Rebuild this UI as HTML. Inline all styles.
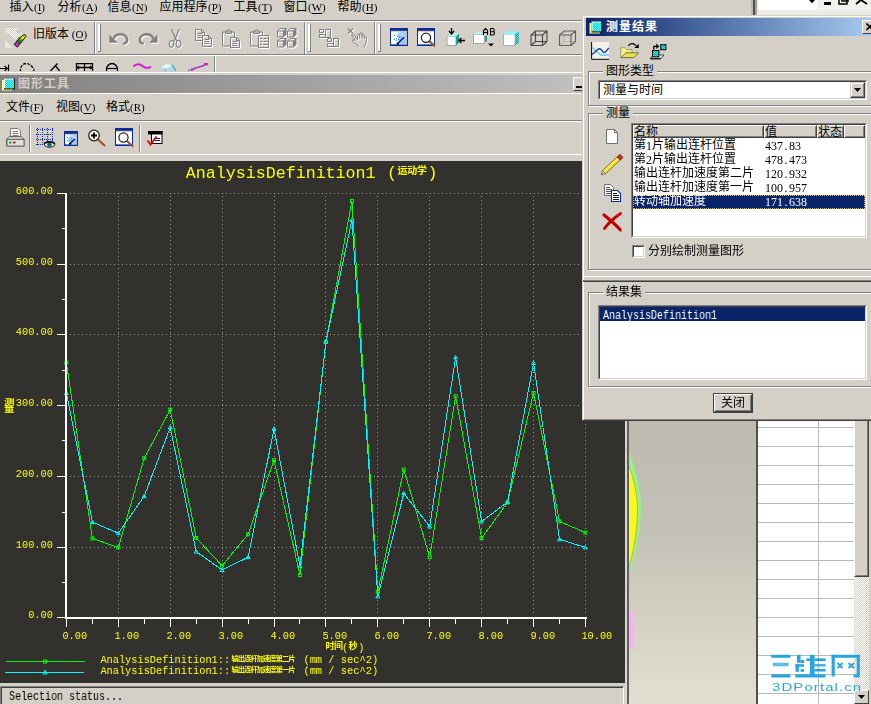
<!DOCTYPE html>
<html><head><meta charset="utf-8"><title>graph</title>
<style>
html,body{margin:0;padding:0}
body{width:871px;height:704px;overflow:hidden;position:relative;background:#d4d0c8;font-family:"Liberation Sans",sans-serif;font-size:12px;color:#000}
.t{position:absolute;white-space:nowrap;line-height:12px;height:12px}
.m,.n,.s{will-change:transform}
.t>*{vertical-align:top}
.cj{display:inline-block;font-family:"Liberation Sans","Noto Sans CJK SC",sans-serif;font-size:12px;line-height:12px;height:12px;white-space:nowrap;color:#000}
.m{font-family:"Liberation Mono",monospace;font-size:12px;letter-spacing:0;line-height:13px;display:inline-block;position:relative;top:1.5px;transform:scaleX(0.8334);transform-origin:0 50%}
.m u{text-decoration:underline;text-underline-offset:1px}
.n{font-family:"Liberation Serif",serif;font-size:12px;line-height:13px;display:inline-block;position:relative;top:1px}
.n i{display:inline-block;width:6px;text-align:center;font-style:normal}
.s{font-family:"Liberation Serif",serif;font-size:11px;line-height:12px;display:inline-block;white-space:pre}
.s u{text-decoration:underline;text-underline-offset:1.5px;text-decoration-thickness:1px}
.sf{position:absolute;white-space:nowrap;font-family:"Liberation Mono",monospace;color:#ffff00;line-height:1}</style></head>
<body>

<div class="t " style="left:9.5px;top:1px;"><span class="cj">插入</span><span class="s">(<u>I</u>)</span></div>
<div class="t " style="left:57.5px;top:1px;"><span class="cj">分析</span><span class="s">(<u>A</u>)</span></div>
<div class="t " style="left:107.5px;top:1px;"><span class="cj">信息</span><span class="s">(<u>N</u>)</span></div>
<div class="t " style="left:159.5px;top:1px;"><span class="cj">应用程序</span><span class="s">(<u>P</u>)</span></div>
<div class="t " style="left:233.5px;top:1px;"><span class="cj">工具</span><span class="s">(<u>T</u>)</span></div>
<div class="t " style="left:283.5px;top:1px;"><span class="cj">窗口</span><span class="s">(<u>W</u>)</span></div>
<div class="t " style="left:337.5px;top:1px;"><span class="cj">帮助</span><span class="s">(<u>H</u>)</span></div>
<div class="" style="position:absolute;left:0px;top:20px;width:582px;height:1px;background:#808080"></div>
<div class="" style="position:absolute;left:0px;top:21px;width:582px;height:1px;background:#fff"></div>
<div class="" style="position:absolute;left:0px;top:54px;width:582px;height:1px;background:#808080"></div>
<div class="" style="position:absolute;left:0px;top:55px;width:582px;height:1px;background:#fff"></div>
<div class="" style="position:absolute;left:94px;top:22px;width:1px;height:32px;background:#808080"></div>
<div class="" style="position:absolute;left:95px;top:22px;width:1px;height:32px;background:#fff"></div>
<div class="" style="position:absolute;left:98px;top:24px;width:3px;height:28px;background:#fff;border-right:1px solid #808080;border-bottom:1px solid #808080;box-sizing:border-box"></div>
<div class="" style="position:absolute;left:304px;top:22px;width:1px;height:32px;background:#808080"></div>
<div class="" style="position:absolute;left:305px;top:22px;width:1px;height:32px;background:#fff"></div>
<div class="" style="position:absolute;left:308px;top:24px;width:3px;height:28px;background:#fff;border-right:1px solid #808080;border-bottom:1px solid #808080;box-sizing:border-box"></div>
<div class="" style="position:absolute;left:374px;top:22px;width:1px;height:32px;background:#808080"></div>
<div class="" style="position:absolute;left:375px;top:22px;width:1px;height:32px;background:#fff"></div>
<div class="" style="position:absolute;left:378px;top:24px;width:3px;height:28px;background:#fff;border-right:1px solid #808080;border-bottom:1px solid #808080;box-sizing:border-box"></div>
<div class="t " style="left:33px;top:27.5px;"><span class="cj">旧版本</span><span class="s"> (<u>O</u>)</span></div>
<div class="" style="position:absolute;left:214px;top:56px;width:1px;height:16px;background:#808080"></div>
<div class="" style="position:absolute;left:215px;top:56px;width:1px;height:16px;background:#fff"></div>
<svg style="position:absolute;left:0;top:0" width="582" height="71" viewBox="0 0 582 71"><defs><pattern id="dith" width="2" height="2" patternUnits="userSpaceOnUse"><rect width="2" height="2" fill="#d4d0c8"/><rect width="1" height="1" fill="#fff"/><rect x="1" y="1" width="1" height="1" fill="#fff"/></pattern><pattern id="dithY" width="2" height="2" patternUnits="userSpaceOnUse"><rect width="2" height="2" fill="#ffff00"/><rect width="1" height="1" fill="#fff"/><rect x="1" y="1" width="1" height="1" fill="#fff"/></pattern><pattern id="dithC" width="2" height="2" patternUnits="userSpaceOnUse"><rect width="2" height="2" fill="#00e0e0"/><rect width="1" height="1" fill="#80ffff"/><rect x="1" y="1" width="1" height="1" fill="#80ffff"/></pattern><pattern id="dithT" width="2" height="2" patternUnits="userSpaceOnUse"><rect width="2" height="2" fill="#20a0a0"/><rect width="1" height="1" fill="#60d8d8"/><rect x="1" y="1" width="1" height="1" fill="#60d8d8"/></pattern><pattern id="dithC2" width="2" height="2" patternUnits="userSpaceOnUse"><rect width="2" height="2" fill="#10d8d8"/><rect width="1" height="1" fill="#60f0f0"/><rect x="1" y="1" width="1" height="1" fill="#60f0f0"/></pattern><pattern id="dithC3" width="2" height="2" patternUnits="userSpaceOnUse"><rect width="2" height="2" fill="#00a8b0"/><rect width="1" height="1" fill="#40e8e0"/><rect x="1" y="1" width="1" height="1" fill="#40e8e0"/></pattern></defs><path d="M5 28H17L22 33V36L17 40.5L5 31.5ZM5 40L13 47.7H5Z" fill="url(#dith)"/><path d="M16 30.5H19.5L21 33H17Z" fill="#c4c4c4"/><g transform="translate(20.2,40.2) rotate(-51)"><path d="M-7.4 -2.4H1.8L7.4 -0.6V2.4H-7.4Z" fill="#000"/><rect x="-6.7" y="-1.6" width="3.2" height="3.2" fill="#e020e0"/><rect x="-3.5" y="-1.6" width="3.4" height="3.2" fill="#109010"/><rect x="-0.1" y="-1.6" width="2" height="3.2" fill="#a0a000"/><path d="M1.9 -1.6L6.8 0V1.6H1.9Z" fill="#f0f000"/></g><path d="M113.5 39C114.5 35.5 117.5 34.3 120.5 34.3C124.5 34.3 127.3 36.8 127.3 39.8C127.3 42 125.8 43.4 123.3 43.8" fill="none" stroke="#fff" stroke-width="2.4" transform="translate(1,1)" /><path d="M113.5 39C114.5 35.5 117.5 34.3 120.5 34.3C124.5 34.3 127.3 36.8 127.3 39.8C127.3 42 125.8 43.4 123.3 43.8" fill="none" stroke="#808080" stroke-width="2.4" /><path d="M109.5 34.5L117.8 42.8L109.5 42.8Z" fill="#fff" transform="translate(1,1)" /><path d="M109.5 34.5L117.8 42.8L109.5 42.8Z" fill="#808080" /><path d="M153.5 39C152.5 35.5 149.5 34.3 146.5 34.3C142.5 34.3 139.7 36.8 139.7 39.8C139.7 42 141.2 43.4 143.7 43.8" fill="none" stroke="#fff" stroke-width="2.4" transform="translate(1,1)" /><path d="M153.5 39C152.5 35.5 149.5 34.3 146.5 34.3C142.5 34.3 139.7 36.8 139.7 39.8C139.7 42 141.2 43.4 143.7 43.8" fill="none" stroke="#808080" stroke-width="2.4" /><path d="M157.5 34.5L149.2 42.8L157.5 42.8Z" fill="#fff" transform="translate(1,1)" /><path d="M157.5 34.5L149.2 42.8L157.5 42.8Z" fill="#808080" /><path d="M171.5 29L176.8 41M179.5 29L174.2 41" fill="none" stroke="#fff" stroke-width="1.2" transform="translate(1,1)" /><path d="M171.5 29L176.8 41M179.5 29L174.2 41" fill="none" stroke="#808080" stroke-width="1.2" /><path d="M172 40.5c-2.2 0-2.8 2-2.8 3.7s0.6 3 2 3s2.8-1.6 2.8-3.6s-0.6-3.1-2-3.1ZM179 40.5c-2.2 0-2.8 2-2.8 3.7s0.6 3 2 3s2.8-1.6 2.8-3.6s-0.6-3.1-2-3.1Z" fill="none" stroke="#fff" stroke-width="1.1" transform="translate(1,1)" /><path d="M172 40.5c-2.2 0-2.8 2-2.8 3.7s0.6 3 2 3s2.8-1.6 2.8-3.6s-0.6-3.1-2-3.1ZM179 40.5c-2.2 0-2.8 2-2.8 3.7s0.6 3 2 3s2.8-1.6 2.8-3.6s-0.6-3.1-2-3.1Z" fill="none" stroke="#808080" stroke-width="1.1" /><path d="M195.5 29.5H201.5L204.5 32.5V40.5H195.5ZM201.5 29.5V32.5H204.5M197.5 33.5H202.5M197.5 35.5H202.5M197.5 37.5H202.5" fill="none" stroke="#fff" stroke-width="1" transform="translate(1,1)" /><path d="M195.5 29.5H201.5L204.5 32.5V40.5H195.5ZM201.5 29.5V32.5H204.5M197.5 33.5H202.5M197.5 35.5H202.5M197.5 37.5H202.5" fill="none" stroke="#808080" stroke-width="1" /><rect x="202" y="36" width="10" height="11" fill="#d4d0c8"/><path d="M202.5 35.5H208.5L211.5 38.5V46.5H202.5ZM208.5 35.5V38.5H211.5M204.5 39.5H209.5M204.5 41.5H209.5M204.5 43.5H209.5" fill="none" stroke="#fff" stroke-width="1" transform="translate(1,1)" /><path d="M202.5 35.5H208.5L211.5 38.5V46.5H202.5ZM208.5 35.5V38.5H211.5M204.5 39.5H209.5M204.5 41.5H209.5M204.5 43.5H209.5" fill="none" stroke="#808080" stroke-width="1" /><path d="M222.5 32H234.5V46H222.5ZM225.5 33.5V31H227.5V30H229.5V31H231.5V33.5Z" fill="none" stroke="#fff" stroke-width="1" transform="translate(1,1)" /><path d="M222.5 32H234.5V46H222.5ZM225.5 33.5V31H227.5V30H229.5V31H231.5V33.5Z" fill="none" stroke="#808080" stroke-width="1" /><rect x="230" y="38" width="10" height="10" fill="#d4d0c8"/><path d="M230.5 37.5H236.5L239.5 40.5V47.5H230.5ZM236.5 37.5V40.5H239.5M232.5 41.5H237.5M232.5 43.5H237.5M232.5 45.5H237.5" fill="none" stroke="#fff" stroke-width="1" transform="translate(1,1)" /><path d="M230.5 37.5H236.5L239.5 40.5V47.5H230.5ZM236.5 37.5V40.5H239.5M232.5 41.5H237.5M232.5 43.5H237.5M232.5 45.5H237.5" fill="none" stroke="#808080" stroke-width="1" /><path d="M250.5 32H262.5V46H250.5ZM253.5 33.5V31H255.5V30H257.5V31H259.5V33.5Z" fill="none" stroke="#fff" stroke-width="1" transform="translate(1,1)" /><path d="M250.5 32H262.5V46H250.5ZM253.5 33.5V31H255.5V30H257.5V31H259.5V33.5Z" fill="none" stroke="#808080" stroke-width="1" /><rect x="258" y="36" width="11" height="12" fill="#d4d0c8"/><path d="M258.5 35.5H268.5V47.5H258.5ZM260 38.5h2M263.5 38.5h4M260 41.5h2M263.5 41.5h4M260 44.5h2M263.5 44.5h4" fill="none" stroke="#fff" stroke-width="1" transform="translate(1,1)" /><path d="M258.5 35.5H268.5V47.5H258.5ZM260 38.5h2M263.5 38.5h4M260 41.5h2M263.5 41.5h4M260 44.5h2M263.5 44.5h4" fill="none" stroke="#808080" stroke-width="1" /><path d="M284.5 32.0L287.0 29.5V35.5L284.5 38.0Z" fill="#fff"/><path d="M277.5 31.0H283.5V37.0H277.5ZM277.5 31.0L280.0 28.5H286.0V34.5L283.5 37.0M283.5 31.0L286.0 28.5" fill="none" stroke="#fff" stroke-width="1" transform="translate(1,1)" /><path d="M277.5 31.0H283.5V37.0H277.5ZM277.5 31.0L280.0 28.5H286.0V34.5L283.5 37.0M283.5 31.0L286.0 28.5" fill="none" stroke="#808080" stroke-width="1" /><path d="M283.5 31.0L286.0 28.5V34.5L283.5 37.0Z" fill="#808080"/><path d="M294.5 32.0L297.0 29.5V35.5L294.5 38.0Z" fill="#fff"/><path d="M287.5 31.0H293.5V37.0H287.5ZM287.5 31.0L290.0 28.5H296.0V34.5L293.5 37.0M293.5 31.0L296.0 28.5" fill="none" stroke="#fff" stroke-width="1" transform="translate(1,1)" /><path d="M287.5 31.0H293.5V37.0H287.5ZM287.5 31.0L290.0 28.5H296.0V34.5L293.5 37.0M293.5 31.0L296.0 28.5" fill="none" stroke="#808080" stroke-width="1" /><path d="M293.5 31.0L296.0 28.5V34.5L293.5 37.0Z" fill="#808080"/><path d="M284.5 42.0L287.0 39.5V45.5L284.5 48.0Z" fill="#fff"/><path d="M277.5 41.0H283.5V47.0H277.5ZM277.5 41.0L280.0 38.5H286.0V44.5L283.5 47.0M283.5 41.0L286.0 38.5" fill="none" stroke="#fff" stroke-width="1" transform="translate(1,1)" /><path d="M277.5 41.0H283.5V47.0H277.5ZM277.5 41.0L280.0 38.5H286.0V44.5L283.5 47.0M283.5 41.0L286.0 38.5" fill="none" stroke="#808080" stroke-width="1" /><path d="M283.5 41.0L286.0 38.5V44.5L283.5 47.0Z" fill="#808080"/><path d="M294.5 42.0L297.0 39.5V45.5L294.5 48.0Z" fill="#fff"/><path d="M287.5 41.0H293.5V47.0H287.5ZM287.5 41.0L290.0 38.5H296.0V44.5L293.5 47.0M293.5 41.0L296.0 38.5" fill="none" stroke="#fff" stroke-width="1" transform="translate(1,1)" /><path d="M287.5 41.0H293.5V47.0H287.5ZM287.5 41.0L290.0 38.5H296.0V44.5L293.5 47.0M293.5 41.0L296.0 38.5" fill="none" stroke="#808080" stroke-width="1" /><path d="M293.5 41.0L296.0 38.5V44.5L293.5 47.0Z" fill="#808080"/><path d="M319.5 29.5H323.5V32.5H319.5ZM319.5 34.5H325.5V37.5H319.5ZM325.5 29.5H330.5V37.5H325.5ZM327.5 38.5H331.5V41.5H327.5ZM327.5 43.5H333.5V46.5H327.5ZM333.5 38.5H338.5V46.5H333.5Z" fill="none" stroke="#fff" stroke-width="1" transform="translate(1,1)" /><path d="M319.5 29.5H323.5V32.5H319.5ZM319.5 34.5H325.5V37.5H319.5ZM325.5 29.5H330.5V37.5H325.5ZM327.5 38.5H331.5V41.5H327.5ZM327.5 43.5H333.5V46.5H327.5ZM333.5 38.5H338.5V46.5H333.5Z" fill="none" stroke="#808080" stroke-width="1" /><path d="M348 28.5L353 33.5M353 28.5L348 33.5" fill="none" stroke="#fff" stroke-width="1.1" transform="translate(1,1)" /><path d="M348 28.5L353 33.5M353 28.5L348 33.5" fill="none" stroke="#808080" stroke-width="1.1" /><path d="M353.5 34L357.5 39.5M357.5 39.5V35.5c0-1.6 2.2-1.6 2.2 0V38.5M359.7 36V34c0-1.6 2.3-1.6 2.3 0V38.5M362 36V34.8c0-1.5 2.2-1.5 2.2 0.1V39M364.2 37.5c0-1.4 2.2-1.2 2.2 0.4V41.5c0 2.5-1.8 3.5-2.4 6M353.5 34c-1.2-1-2.4 0.2-1.4 1.4L355.5 40.5L353.8 39.8c-1.4-0.5-2 1-1 1.7L356.5 44.5c0.8 1.2 1.2 2 1.6 3" fill="none" stroke="#fff" stroke-width="1" transform="translate(1,1)" /><path d="M353.5 34L357.5 39.5M357.5 39.5V35.5c0-1.6 2.2-1.6 2.2 0V38.5M359.7 36V34c0-1.6 2.3-1.6 2.3 0V38.5M362 36V34.8c0-1.5 2.2-1.5 2.2 0.1V39M364.2 37.5c0-1.4 2.2-1.2 2.2 0.4V41.5c0 2.5-1.8 3.5-2.4 6M353.5 34c-1.2-1-2.4 0.2-1.4 1.4L355.5 40.5L353.8 39.8c-1.4-0.5-2 1-1 1.7L356.5 44.5c0.8 1.2 1.2 2 1.6 3" fill="none" stroke="#808080" stroke-width="1" /><rect x="390" y="28" width="18" height="18" fill="#fff"/><rect x="390.5" y="28.5" width="17" height="17" fill="none" stroke="#0a2aa0"/><rect x="390" y="44.4" width="18" height="1.6" fill="#0a2aa0"/><rect x="390" y="28" width="18" height="2.3" fill="#0a2aa0"/><rect x="391" y="30.3" width="16" height="0.9" fill="#101830"/><path d="M397.0 31.2H407V44.4H399.5Z" fill="#a0c8f2"/><path d="M397.0 32.5C401.0 33 404.0 35.0 405.5 38.5" stroke="#e8f2fc" stroke-width="1.6" stroke-dasharray="1 1" fill="none"/><path d="M404.2 37.2L397.6 43.6" stroke="#0c0c80" stroke-width="1.4"/><rect x="396.6" y="42.8" width="2.2" height="1.8" fill="#000"/><rect x="393.8" y="34.9" width="1.2" height="1.2" fill="#1c90ff"/><rect x="396.9" y="35.8" width="1.2" height="1.2" fill="#1c90ff"/><rect x="399.0" y="36.7" width="1.2" height="1.2" fill="#1c90ff"/><rect x="393.8" y="38.6" width="1.2" height="1.2" fill="#1c90ff"/><rect x="395.9" y="38.0" width="1.2" height="1.2" fill="#1c90ff"/><rect x="398.1" y="38.9" width="1.2" height="1.2" fill="#1c90ff"/><rect x="395.9" y="40.1" width="1.2" height="1.2" fill="#1c90ff"/><rect x="417" y="28" width="18" height="18" fill="#fff"/><rect x="417.5" y="28.5" width="17" height="17" fill="none" stroke="#0a2aa0"/><rect x="417" y="44.4" width="18" height="1.6" fill="#0a2aa0"/><rect x="417" y="28" width="18" height="2.3" fill="#0a2aa0"/><rect x="418" y="30.3" width="16" height="0.9" fill="#101830"/><path d="M429.2 41.0L434.2 45.8" stroke="#a0522d" stroke-width="2.2" stroke-linecap="round"/><circle cx="426" cy="37.8" r="4.6" fill="#f8f8f4" stroke="#202020" stroke-width="1.2"/><path d="M447 36.5H456V45.5H447Z" fill="#fff" stroke="#909090" stroke-width="0.8"/><path d="M447 36.5L450 33.5H459L456 36.5Z" fill="#b0f4f4"/><path d="M456 36.5L459 33.5V42.5L456 45.5Z" fill="#18a0a0"/><path d="M451.5 28V33M449 31L451.5 34L454 31" stroke="#000" stroke-width="1.3" fill="none"/><path d="M465 40.5H459M461.5 38L458.7 40.5L461.5 43" stroke="#000" stroke-width="1.3" fill="none"/><path d="M473.5 34.5H484.5V43.5H473.5Z" fill="#fff" stroke="#909090" stroke-width="0.8"/><path d="M473.5 34.5L476 32H487L484.5 34.5Z" fill="#b0f4f4"/><path d="M485 36H487V41L485 42Z" fill="#18a0a0"/><rect x="482" y="27" width="13" height="8.5" fill="#d4d0c8"/><path d="M483.5 35V30.5L485.5 28.5L487.5 30.5V35M483.5 32.5H487.5" stroke="#000" stroke-width="1.1" fill="none"/><path d="M490.5 28.5V35H493c2 0 2-3.2 0-3.2H490.5M493 31.8c1.6 0 1.6-3.3 0-3.3H490.5" stroke="#000" stroke-width="1.1" fill="none"/><path d="M488 43.5H494L491 46.5Z" fill="#000"/><path d="M503.5 34H515V45.5H503.5Z" fill="#fff" stroke="#a0a0a0" stroke-width="0.8"/><path d="M503.5 34L507 31.5H519L515 34Z" fill="#80ffff"/><path d="M515 34L519 31.5V43L515 45.5Z" fill="url(#dithT)"/><path d="M535.5 31V41.5H547M535.5 41.5L531 45.5" fill="none" stroke="#484848" stroke-width="1.1"/><path d="M531 35H542.5V45.5H531ZM531 35L535.5 31H547V41.5L542.5 45.5M542.5 35L547 31" fill="none" stroke="#484848" stroke-width="1.1"/><path d="M564.0 31V41.5H575.5M564.0 41.5L559.5 45.5" fill="none" stroke="#b4b4b4" stroke-width="1.1"/><path d="M559.5 35H571.0V45.5H559.5ZM559.5 35L564.0 31H575.5V41.5L571.0 45.5M571.0 35L575.5 31" fill="none" stroke="#606060" stroke-width="1.1"/><path d="M0 68.5H7M4.5 66L7.2 68.5L4.5 71M8.5 64.5V72" stroke="#000" stroke-width="1.2" fill="none"/><path d="M20.5 72C20 66 23 63.5 26.5 63.5C30 63.5 32 67 34.5 69.5" stroke="#000" stroke-width="1.3" fill="none" stroke-dasharray="3 1.2"/><rect x="33" y="70" width="1.5" height="1.5"/><path d="M50 71.5L57.5 63.5M55.5 66L60.5 72" stroke="#000" stroke-width="1.3" fill="none"/><path d="M76.5 63V72M92.5 63V72M76 63.7H93M84.5 64V72M77 67.5H92M79 66L77.3 67.5L79 69M90 66L91.7 67.5L90 69" stroke="#000" stroke-width="1.3" fill="none"/><ellipse cx="112" cy="69.5" rx="5.5" ry="6" fill="none" stroke="#000" stroke-width="1.3"/><path d="M106.5 68.5H117.5" stroke="#000" stroke-width="1.2"/><path d="M133.5 66.5C136 63.5 140 63.5 142.5 66C145 68.5 148.5 68.5 151 66.5" stroke="#d020d0" stroke-width="2" fill="none"/><path d="M161 69L165 64.5H172L176.5 72H161Z" fill="#a8dcf0"/><path d="M165 64.5H172L168.5 68H161.5Z" fill="#e8f8ff"/><path d="M165 68.5L167.5 72H164Z" fill="#f080d0"/><path d="M172 64.5L176.5 72" stroke="#4080a0" stroke-width="1"/><path d="M188 71.5C192 67 199 69 206.5 63.5" stroke="#2040c0" stroke-width="1.1" fill="none" stroke-dasharray="2.5 1"/><path d="M190 72C196 66 201 68 207 64" stroke="#d020d0" stroke-width="1.2" fill="none"/><path d="M204 63.5h3.5v2" stroke="#d020d0" stroke-width="1.2" fill="none"/></svg>
<div class="" style="position:absolute;left:0px;top:72px;width:582px;height:1px;background:#fff"></div>
<div class="" style="position:absolute;left:0px;top:75px;width:582px;height:18px;background:linear-gradient(90deg,#808080 0%,#c0c0c0 100%)"></div>
<div class="t " style="left:18px;top:77.5px;"><span class="cj" style="color:#d4d0c8;font-weight:bold;letter-spacing:1px">图形工具</span></div>
<div class="" style="position:absolute;left:573px;top:77px;width:12px;height:14px;background:#d4d0c8;border:1px solid;border-color:#fff #404040 #404040 #fff;box-sizing:border-box"></div>
<div class="" style="position:absolute;left:576px;top:86px;width:6px;height:2px;background:#000"></div>
<div class="" style="position:absolute;left:0px;top:93px;width:582px;height:1px;background:#fff"></div>
<div class="t " style="left:6px;top:100.5px;"><span class="cj">文件</span><span class="s">(<u>F</u>)</span></div>
<div class="t " style="left:56px;top:100.5px;"><span class="cj">视图</span><span class="s">(<u>V</u>)</span></div>
<div class="t " style="left:106px;top:100.5px;"><span class="cj">格式</span><span class="s">(<u>R</u>)</span></div>
<div class="" style="position:absolute;left:0px;top:120px;width:582px;height:1px;background:#808080"></div>
<div class="" style="position:absolute;left:0px;top:121px;width:582px;height:1px;background:#fff"></div>
<div class="" style="position:absolute;left:29px;top:125px;width:1px;height:27px;background:#808080"></div>
<div class="" style="position:absolute;left:30px;top:125px;width:1px;height:27px;background:#fff"></div>
<div class="" style="position:absolute;left:139px;top:125px;width:1px;height:27px;background:#808080"></div>
<div class="" style="position:absolute;left:140px;top:125px;width:1px;height:27px;background:#fff"></div>
<div class="" style="position:absolute;left:0px;top:154px;width:582px;height:1px;background:#fff"></div>
<svg style="position:absolute;left:0;top:74px" width="200" height="80" viewBox="0 74 200 80"><rect x="2" y="80" width="10.5" height="10.5" fill="url(#dithY)"/><rect x="4" y="78.5" width="11" height="11" fill="#101010"/><rect x="4" y="78.5" width="9.7" height="9.7" fill="#fff"/><rect x="5" y="79.5" width="8.7" height="8.7" fill="url(#dithC2)"/><path d="M10.5 128.5H18L20.5 131V137H10.5Z" fill="#fff" stroke="#707070" stroke-width="0.9"/><path d="M12.5 131.5H18M12.5 133.5H18.5M12.5 135.5H18.5" stroke="#606060" stroke-width="0.8"/><path d="M6.5 139L9.5 136.5H21L24 139V146H6.5Z" fill="#c8c8c8" stroke="#606060" stroke-width="0.9"/><rect x="7" y="139.5" width="17" height="6.5" fill="#e0e0dc" stroke="#606060" stroke-width="0.9"/><rect x="9" y="141.5" width="2.5" height="2" fill="#00c020"/><rect x="13" y="141.5" width="2.5" height="2" fill="#e01010"/><path d="M36 129.5H54M37.5 128V146M36 134.5H54M42.5 128V146M36 139.5H54M47.5 128V146M36 144.5H54M52.5 128V146" stroke="#1030c8" stroke-width="1" stroke-dasharray="1 1" fill="none" shape-rendering="crispEdges"/><ellipse cx="49.5" cy="144.6" rx="5.3" ry="2.6" fill="#e8e8e8" stroke="#000" stroke-width="0.9"/><circle cx="49.5" cy="144.6" r="2.3" fill="#0c6878"/><path d="M44 143.6C47 141 52 141 55 143.6" stroke="#000" stroke-width="1.5" fill="none"/><rect x="64" y="131" width="14" height="15" fill="#fff"/><rect x="64.5" y="131.5" width="13" height="14" fill="none" stroke="#0a2aa0"/><rect x="64" y="144.4" width="14" height="1.6" fill="#0a2aa0"/><rect x="64" y="131" width="14" height="2.3" fill="#0a2aa0"/><rect x="65" y="133.3" width="12" height="0.9" fill="#101830"/><path d="M69.4 134.2H77V144.4H71.4Z" fill="#a0c8f2"/><path d="M69.4 135.5C72.6 136 74.9 136.4 75.5 139.2" stroke="#e8f2fc" stroke-width="1.6" stroke-dasharray="1 1" fill="none"/><path d="M75.0 138.9L69.9 143.6" stroke="#0c0c80" stroke-width="1.4"/><rect x="69.1" y="142.8" width="2.2" height="1.8" fill="#000"/><rect x="66.8" y="136.9" width="1.2" height="1.2" fill="#1c90ff"/><rect x="69.2" y="137.6" width="1.2" height="1.2" fill="#1c90ff"/><rect x="70.9" y="138.3" width="1.2" height="1.2" fill="#1c90ff"/><rect x="66.8" y="139.8" width="1.2" height="1.2" fill="#1c90ff"/><rect x="68.5" y="139.3" width="1.2" height="1.2" fill="#1c90ff"/><rect x="70.2" y="140.0" width="1.2" height="1.2" fill="#1c90ff"/><rect x="68.5" y="140.9" width="1.2" height="1.2" fill="#1c90ff"/><path d="M97.7 139.2L104.5 145.5" stroke="#a0522d" stroke-width="2.2" stroke-linecap="round"/><circle cx="94" cy="135.5" r="5.3" fill="#f8f8f4" stroke="#202020" stroke-width="1.2"/><path d="M91 135.5h6M94 132.5v6" stroke="#000" stroke-width="1.8"/><rect x="115" y="128" width="18" height="18" fill="#fff"/><rect x="115.5" y="128.5" width="17" height="17" fill="none" stroke="#0a2aa0"/><rect x="115" y="144.4" width="18" height="1.6" fill="#0a2aa0"/><rect x="115" y="128" width="18" height="2.3" fill="#0a2aa0"/><rect x="116" y="130.3" width="16" height="0.9" fill="#101830"/><path d="M126.7 140.7L132.5 146" stroke="#a0522d" stroke-width="2.2" stroke-linecap="round"/><circle cx="123.5" cy="137.5" r="4.6" fill="#f8f8f4" stroke="#202020" stroke-width="1.2"/><rect x="151.5" y="131.5" width="10.5" height="12" fill="#fff" stroke="#000" stroke-width="1"/><rect x="148" y="131" width="14.5" height="3.5" fill="#000"/><path d="M155 138.5h5M155 140.5h5" stroke="#000" stroke-width="0.9"/><path d="M147.5 140.5L150.5 144.5L156.5 136.5" stroke="#e00000" stroke-width="1.8" fill="none"/></svg>
<div style="position:absolute;left:0;top:161px;width:625px;height:522px;background:#33312e"></div>
<svg style="position:absolute;left:0;top:0" width="625" height="683" viewBox="0 0 625 683">
<g stroke="#9a9a96" stroke-width="1" stroke-dasharray="1 3" fill="none" shape-rendering="crispEdges">
<path d="M70 547.5H586"/>
<path d="M70 476.5H586"/>
<path d="M70 405.5H586"/>
<path d="M70 334.5H586"/>
<path d="M70 264.5H586"/>
<path d="M70 193.5H586"/>
<path d="M118.5 196V616"/>
<path d="M170.5 196V616"/>
<path d="M222.5 196V616"/>
<path d="M274.5 196V616"/>
<path d="M325.5 196V616"/>
<path d="M377.5 196V616"/>
<path d="M429.5 196V616"/>
<path d="M481.5 196V616"/>
<path d="M533.5 196V616"/>
<path d="M585.5 196V616"/>
</g>
<polyline points="66.4,362.5 92.4,538.5 118.3,547.5 144.2,458.2 170.2,409.6 196.2,538.0 222.1,565.7 248.1,534.2 274.0,460.2 299.9,575.1 325.9,342.0 351.9,201.0 377.8,591.7 403.8,469.5 429.7,557.2 455.6,396.3 481.6,538.0 507.5,502.5 533.5,393.0 559.5,521.4 585.4,532.7" fill="none" stroke="#00f800" stroke-width="1" shape-rendering="crispEdges"/>
<polyline points="66.4,393.0 92.4,522.2 118.3,533.2 144.2,496.2 170.2,427.5 196.2,551.6 222.1,570.0 248.1,557.2 274.0,428.8 299.9,566.2 325.9,341.7 351.9,220.2 377.8,596.4 403.8,493.4 429.7,526.5 455.6,357.4 481.6,521.4 507.5,502.0 533.5,363.0 559.5,539.3 585.4,547.5" fill="none" stroke="#00f8f8" stroke-width="1" shape-rendering="crispEdges"/>
<rect x="64.9" y="361.0" width="3" height="3" fill="none" stroke="#00f800" stroke-width="1"/>
<rect x="90.9" y="537.0" width="3" height="3" fill="none" stroke="#00f800" stroke-width="1"/>
<rect x="116.8" y="546.0" width="3" height="3" fill="none" stroke="#00f800" stroke-width="1"/>
<rect x="142.8" y="456.7" width="3" height="3" fill="none" stroke="#00f800" stroke-width="1"/>
<rect x="168.7" y="408.1" width="3" height="3" fill="none" stroke="#00f800" stroke-width="1"/>
<rect x="194.7" y="536.5" width="3" height="3" fill="none" stroke="#00f800" stroke-width="1"/>
<rect x="220.6" y="564.2" width="3" height="3" fill="none" stroke="#00f800" stroke-width="1"/>
<rect x="246.6" y="532.7" width="3" height="3" fill="none" stroke="#00f800" stroke-width="1"/>
<rect x="272.5" y="458.7" width="3" height="3" fill="none" stroke="#00f800" stroke-width="1"/>
<rect x="298.4" y="573.6" width="3" height="3" fill="none" stroke="#00f800" stroke-width="1"/>
<rect x="324.4" y="340.5" width="3" height="3" fill="none" stroke="#00f800" stroke-width="1"/>
<rect x="350.4" y="199.5" width="3" height="3" fill="none" stroke="#00f800" stroke-width="1"/>
<rect x="376.3" y="590.2" width="3" height="3" fill="none" stroke="#00f800" stroke-width="1"/>
<rect x="402.2" y="468.0" width="3" height="3" fill="none" stroke="#00f800" stroke-width="1"/>
<rect x="428.2" y="555.7" width="3" height="3" fill="none" stroke="#00f800" stroke-width="1"/>
<rect x="454.1" y="394.8" width="3" height="3" fill="none" stroke="#00f800" stroke-width="1"/>
<rect x="480.1" y="536.5" width="3" height="3" fill="none" stroke="#00f800" stroke-width="1"/>
<rect x="506.0" y="501.0" width="3" height="3" fill="none" stroke="#00f800" stroke-width="1"/>
<rect x="532.0" y="391.5" width="3" height="3" fill="none" stroke="#00f800" stroke-width="1"/>
<rect x="558.0" y="519.9" width="3" height="3" fill="none" stroke="#00f800" stroke-width="1"/>
<rect x="583.9" y="531.2" width="3" height="3" fill="none" stroke="#00f800" stroke-width="1"/>
<path d="M64.4 394.5L66.4 391.0L68.4 394.5Z" fill="none" stroke="#00f8f8" stroke-width="1"/>
<path d="M90.4 523.7L92.4 520.2L94.4 523.7Z" fill="none" stroke="#00f8f8" stroke-width="1"/>
<path d="M116.3 534.7L118.3 531.2L120.3 534.7Z" fill="none" stroke="#00f8f8" stroke-width="1"/>
<path d="M142.2 497.7L144.2 494.2L146.2 497.7Z" fill="none" stroke="#00f8f8" stroke-width="1"/>
<path d="M168.2 429.0L170.2 425.5L172.2 429.0Z" fill="none" stroke="#00f8f8" stroke-width="1"/>
<path d="M194.2 553.1L196.2 549.6L198.2 553.1Z" fill="none" stroke="#00f8f8" stroke-width="1"/>
<path d="M220.1 571.5L222.1 568.0L224.1 571.5Z" fill="none" stroke="#00f8f8" stroke-width="1"/>
<path d="M246.1 558.7L248.1 555.2L250.1 558.7Z" fill="none" stroke="#00f8f8" stroke-width="1"/>
<path d="M272.0 430.3L274.0 426.8L276.0 430.3Z" fill="none" stroke="#00f8f8" stroke-width="1"/>
<path d="M297.9 567.7L299.9 564.2L301.9 567.7Z" fill="none" stroke="#00f8f8" stroke-width="1"/>
<path d="M323.9 343.2L325.9 339.7L327.9 343.2Z" fill="none" stroke="#00f8f8" stroke-width="1"/>
<path d="M349.9 221.7L351.9 218.2L353.9 221.7Z" fill="none" stroke="#00f8f8" stroke-width="1"/>
<path d="M375.8 597.9L377.8 594.4L379.8 597.9Z" fill="none" stroke="#00f8f8" stroke-width="1"/>
<path d="M401.8 494.9L403.8 491.4L405.8 494.9Z" fill="none" stroke="#00f8f8" stroke-width="1"/>
<path d="M427.7 528.0L429.7 524.5L431.7 528.0Z" fill="none" stroke="#00f8f8" stroke-width="1"/>
<path d="M453.6 358.9L455.6 355.4L457.6 358.9Z" fill="none" stroke="#00f8f8" stroke-width="1"/>
<path d="M479.6 522.9L481.6 519.4L483.6 522.9Z" fill="none" stroke="#00f8f8" stroke-width="1"/>
<path d="M505.5 503.5L507.5 500.0L509.5 503.5Z" fill="none" stroke="#00f8f8" stroke-width="1"/>
<path d="M531.5 364.5L533.5 361.0L535.5 364.5Z" fill="none" stroke="#00f8f8" stroke-width="1"/>
<path d="M557.5 540.8L559.5 537.3L561.5 540.8Z" fill="none" stroke="#00f8f8" stroke-width="1"/>
<path d="M583.4 549.0L585.4 545.5L587.4 549.0Z" fill="none" stroke="#00f8f8" stroke-width="1"/>
<g fill="#fff" shape-rendering="crispEdges">
<rect x="65" y="193" width="2" height="426"/>
<rect x="65" y="617" width="521.5" height="2"/>
<rect x="57" y="617" width="8" height="1"/>
<rect x="62" y="582" width="3" height="1"/>
<rect x="57" y="547" width="8" height="1"/>
<rect x="62" y="512" width="3" height="1"/>
<rect x="57" y="476" width="8" height="1"/>
<rect x="62" y="440" width="3" height="1"/>
<rect x="57" y="405" width="8" height="1"/>
<rect x="62" y="370" width="3" height="1"/>
<rect x="57" y="334" width="8" height="1"/>
<rect x="62" y="299" width="3" height="1"/>
<rect x="57" y="264" width="8" height="1"/>
<rect x="62" y="228" width="3" height="1"/>
<rect x="57" y="193" width="8" height="1"/>
<rect x="66" y="619" width="1" height="8"/>
<rect x="92" y="619" width="1" height="5"/>
<rect x="118" y="619" width="1" height="8"/>
<rect x="144" y="619" width="1" height="5"/>
<rect x="170" y="619" width="1" height="8"/>
<rect x="196" y="619" width="1" height="5"/>
<rect x="222" y="619" width="1" height="8"/>
<rect x="248" y="619" width="1" height="5"/>
<rect x="274" y="619" width="1" height="8"/>
<rect x="299" y="619" width="1" height="5"/>
<rect x="325" y="619" width="1" height="8"/>
<rect x="351" y="619" width="1" height="5"/>
<rect x="377" y="619" width="1" height="8"/>
<rect x="403" y="619" width="1" height="5"/>
<rect x="429" y="619" width="1" height="8"/>
<rect x="455" y="619" width="1" height="5"/>
<rect x="481" y="619" width="1" height="8"/>
<rect x="507" y="619" width="1" height="5"/>
<rect x="533" y="619" width="1" height="8"/>
<rect x="559" y="619" width="1" height="5"/>
<rect x="585" y="619" width="1" height="8"/>
</g>
<path d="M6 661.5H85" stroke="#00f800" stroke-width="1"/><rect x="43.5" y="660" width="3" height="3" fill="none" stroke="#00f800"/>
<path d="M5 672.5H84" stroke="#00f8f8" stroke-width="1"/><path d="M43 674L45 670L47 674Z" fill="none" stroke="#00f8f8"/>
</svg>
<div class="t" style="left:397.5px;top:166px"><span class="cj" style="color:#ffff00;font-size:10px;line-height:10px;height:10px;font-weight:bold;letter-spacing:-0.3px">运动学</span></div>
<div class="t" style="left:325.5px;top:642px"><span class="cj" style="color:#ffff00;font-size:9px;line-height:9px;height:9px;font-weight:bold;letter-spacing:-0.4px">时间</span></div>
<div class="t" style="left:348.5px;top:642px"><span class="cj" style="color:#ffff00;font-size:9px;line-height:9px;height:9px;font-weight:bold">秒</span></div>
<div class="t" style="left:4px;top:398.5px;transform:scale(1,0.72);transform-origin:0 0"><span class="cj" style="color:#ffff00;font-size:10.5px;line-height:10.5px;height:10.5px;font-weight:bold">测</span></div>
<div class="t" style="left:4px;top:405.5px;transform:scale(1,0.72);transform-origin:0 0"><span class="cj" style="color:#ffff00;font-size:10.5px;line-height:10.5px;height:10.5px;font-weight:bold">量</span></div>
<div class="t" style="left:231.5px;top:655px"><span class="cj" style="color:#ffff00;font-size:7.2px;line-height:7.2px;height:7.2px;font-weight:bold;letter-spacing:-0.87px">输出连杆加速度第二片</span></div>
<div class="t" style="left:231.5px;top:666px"><span class="cj" style="color:#ffff00;font-size:7.2px;line-height:7.2px;height:7.2px;font-weight:bold;letter-spacing:-0.87px">输出连杆加速度第一片</span></div>
<svg style="position:absolute;left:0;top:0" width="625" height="683" viewBox="0 0 625 683">
<g fill="#ffff00" font-family="'Liberation Mono',monospace" font-size="10.3">
<text x="52.9" y="617.5" text-anchor="end">0.00</text>
<text x="52.9" y="547.5" text-anchor="end">100.00</text>
<text x="52.9" y="476.5" text-anchor="end">200.00</text>
<text x="52.9" y="405.5" text-anchor="end">300.00</text>
<text x="52.9" y="334.5" text-anchor="end">400.00</text>
<text x="52.9" y="264.5" text-anchor="end">500.00</text>
<text x="52.9" y="193.5" text-anchor="end">600.00</text>
<text x="62.4" y="638.5">0.00</text>
<text x="114.4" y="638.5">1.00</text>
<text x="166.4" y="638.5">2.00</text>
<text x="218.4" y="638.5">3.00</text>
<text x="270.4" y="638.5">4.00</text>
<text x="322.4" y="638.5">5.00</text>
<text x="374.4" y="638.5">6.00</text>
<text x="426.4" y="638.5">7.00</text>
<text x="478.4" y="638.5">8.00</text>
<text x="530.4" y="638.5">9.00</text>
<text x="581.4" y="638.5">10.00</text>
<text x="342.1" y="650.5">(</text>
<text x="358.2" y="650.5">)</text>
<text x="100.4" y="662.5">AnalysisDefinition1::</text>
<text x="303.4" y="662.5" font-size="10.4">(mm / sec^2)</text>
<text x="100.4" y="673.5">AnalysisDefinition1::</text>
<text x="303.4" y="673.5" font-size="10.4">(mm / sec^2)</text>
</g>
<g fill="#ffff00" font-family="'Liberation Mono',monospace" font-size="16.67">
<text x="185.7" y="177.5">AnalysisDefinition1</text>
<text x="387" y="177.5">(</text>
<text x="427.5" y="177.5">)</text>
</g>
</svg>
<div class="" style="position:absolute;left:0px;top:686px;width:624px;height:18px;border-top:1px solid #808080;border-left:1px solid #808080;border-right:1px solid #fff;box-sizing:border-box"></div>
<div class="" style="position:absolute;left:1px;top:687px;width:622px;height:17px;border-top:1px solid #404040;border-left:1px solid #404040;box-sizing:border-box"></div>
<div class="t " style="left:9px;top:689.3px;"><span class="m">Selection status...</span></div>
<div style="position:absolute;left:751px;top:0px;width:3px;height:15px;box-sizing:border-box;background:#bcb9b1"></div>
<div style="position:absolute;left:753px;top:0px;width:2px;height:15px;box-sizing:border-box;background:#505050"></div>
<div style="position:absolute;left:755px;top:0px;width:2px;height:15px;box-sizing:border-box;background:#a0a0a0"></div>
<div style="position:absolute;left:756.5px;top:0px;width:1.5px;height:15px;box-sizing:border-box;background:#484848"></div>
<div style="position:absolute;left:757px;top:0px;width:114px;height:15px;box-sizing:border-box;background:#ecebe6"></div>
<div style="position:absolute;left:758px;top:0px;width:59px;height:10px;box-sizing:border-box;background:#fff"></div>
<div style="position:absolute;left:817px;top:0px;width:54px;height:10px;box-sizing:border-box;background:#f2f1ed"></div>
<svg style="position:absolute;left:806px;top:0" width="65" height="6"><path d="M3 0H9L6 3.2Z" fill="#000"/><rect x="18" y="2" width="7" height="3" fill="#000"/><path d="M33 0V4H41V0M36 0V1H43" stroke="#000" stroke-width="1.5" fill="none"/><path d="M50 4L55 0M55 0L61 4" stroke="#000" stroke-width="1.8" fill="none"/></svg>
<div style="position:absolute;left:625px;top:421px;width:3px;height:283px;box-sizing:border-box;background:#d9d6cf"></div>
<div style="position:absolute;left:627px;top:421px;width:2px;height:283px;box-sizing:border-box;background:#606060"></div>
<div style="position:absolute;left:629px;top:421px;width:127px;height:283px;box-sizing:border-box;background:linear-gradient(180deg,#bdbbaf 0%,#c4c2b6 40%,#d9d6c9 80%,#e2dfd2 100%)"></div>
<svg style="position:absolute;left:629px;top:440px" width="20" height="220" viewBox="629 440 20 220"><path d="M629 451 C636 470 641 490 641 508 C641 530 636 555 629 575Z" fill="#98f088"/><path d="M629 466 C634 480 637.5 495 637.5 510 C637.5 528 634 550 629 567Z" fill="#f8f820"/><path d="M629 466 C634 480 637.5 495 637.5 510 C637.5 528 634 550 629 567" fill="none" stroke="#c0a020" stroke-width="0.7"/><rect x="629" y="611" width="5" height="38" fill="#f8b0f8"/></svg>
<div style="position:absolute;left:756px;top:421px;width:2px;height:283px;box-sizing:border-box;background:#505050"></div>
<div style="position:absolute;left:758px;top:421px;width:96px;height:283px;box-sizing:border-box;background:#fff"></div>
<div style="position:absolute;left:758px;top:427px;width:96px;height:1px;box-sizing:border-box;background:#b8b8b8"></div>
<div style="position:absolute;left:758px;top:446px;width:96px;height:1px;box-sizing:border-box;background:#b8b8b8"></div>
<div style="position:absolute;left:758px;top:465px;width:96px;height:1px;box-sizing:border-box;background:#b8b8b8"></div>
<div style="position:absolute;left:758px;top:484px;width:96px;height:1px;box-sizing:border-box;background:#b8b8b8"></div>
<div style="position:absolute;left:758px;top:503px;width:96px;height:1px;box-sizing:border-box;background:#b8b8b8"></div>
<div style="position:absolute;left:758px;top:522px;width:96px;height:1px;box-sizing:border-box;background:#b8b8b8"></div>
<div style="position:absolute;left:758px;top:541px;width:96px;height:1px;box-sizing:border-box;background:#b8b8b8"></div>
<div style="position:absolute;left:758px;top:560px;width:96px;height:1px;box-sizing:border-box;background:#b8b8b8"></div>
<div style="position:absolute;left:758px;top:579px;width:96px;height:1px;box-sizing:border-box;background:#b8b8b8"></div>
<div style="position:absolute;left:758px;top:598px;width:96px;height:1px;box-sizing:border-box;background:#b8b8b8"></div>
<div style="position:absolute;left:758px;top:617px;width:96px;height:1px;box-sizing:border-box;background:#b8b8b8"></div>
<div style="position:absolute;left:758px;top:636px;width:96px;height:1px;box-sizing:border-box;background:#b8b8b8"></div>
<div style="position:absolute;left:758px;top:655px;width:96px;height:1px;box-sizing:border-box;background:#b8b8b8"></div>
<div style="position:absolute;left:758px;top:674px;width:96px;height:1px;box-sizing:border-box;background:#b8b8b8"></div>
<div style="position:absolute;left:758px;top:693px;width:96px;height:1px;box-sizing:border-box;background:#b8b8b8"></div>
<div style="position:absolute;left:818px;top:421px;width:1px;height:283px;box-sizing:border-box;background:#b8b8b8"></div>
<div style="position:absolute;left:854px;top:421px;width:15px;height:283px;box-sizing:border-box;background:repeating-conic-gradient(#fff 0% 25%, #d4d0c8 0% 50%) 0 0/2px 2px"></div>
<div style="position:absolute;left:854px;top:410px;width:15px;height:167px;box-sizing:border-box;background:#d4d0c8;border:1px solid;border-color:#fff #404040 #404040 #fff"></div>
<div style="position:absolute;left:855px;top:411px;width:13px;height:165px;box-sizing:border-box;border:1px solid;border-color:transparent #808080 #808080 transparent"></div>
<div style="position:absolute;left:854px;top:690px;width:15px;height:14px;box-sizing:border-box;background:#d4d0c8;border:1px solid;border-color:#fff #404040 #404040 #fff"></div>
<svg style="position:absolute;left:858px;top:695px" width="7" height="4"><path d="M0 0H7L3.5 4Z" fill="#000"/></svg>
<div style="position:absolute;left:869px;top:421px;width:2px;height:283px;box-sizing:border-box;background:#d4d0c8"></div>
<svg style="position:absolute;left:764px;top:648px" width="107" height="34" viewBox="764 648 107 34" fill="#27a6de"><rect x="771.4" y="654.8" width="19" height="3"/><rect x="773" y="662.7" width="15.6" height="3.6" opacity="0.75"/><rect x="771.4" y="674.3" width="19" height="3.2"/><rect x="797" y="654.8" width="3.6" height="8"/><rect x="800.6" y="660" width="3.4" height="3"/><rect x="795.5" y="664.2" width="8.5" height="2.6"/><rect x="795.5" y="664.2" width="3.4" height="7.6"/><rect x="800.5" y="669.2" width="3.6" height="2.6"/><rect x="810" y="654.8" width="4.6" height="21"/><rect x="814.6" y="658.4" width="11" height="2.6"/><rect x="814.6" y="664" width="11" height="2.5" opacity="0.85"/><rect x="814.6" y="669" width="11" height="2.5"/><rect x="806.5" y="658.4" width="3.5" height="2.6"/><rect x="795.3" y="674.3" width="30.2" height="3.2"/><rect x="831.6" y="654.8" width="28.2" height="3"/><rect x="831.6" y="654.8" width="3.2" height="21.6"/><rect x="856.7" y="654.8" width="3.1" height="22.5"/><rect x="853.5" y="674.3" width="4" height="3"/><path d="M837.5 663L842.5 668M842.5 663L837.5 668M848.5 663L854 668M854 663L848.5 668" stroke="#27a6de" stroke-width="2" fill="none"/></svg>
<div style="position:absolute;left:771.5px;top:683px;font-size:12.5px;line-height:13px;letter-spacing:0.9px;color:#27a6de;white-space:nowrap;transform:scale(1.2,0.8);transform-origin:0 0">3DPortal.cn</div>
<div style="position:absolute;left:582px;top:15px;width:300px;height:406px;box-sizing:border-box;background:#d4d0c8;border:1px solid;border-color:#d4d0c8 #404040 #404040 #d4d0c8"></div>
<div style="position:absolute;left:583px;top:16px;width:300px;height:404px;box-sizing:border-box;border:1px solid;border-color:#fff #808080 #808080 #fff"></div>
<div style="position:absolute;left:586px;top:18px;width:285px;height:18px;box-sizing:border-box;background:linear-gradient(90deg,#0a246a 0%,#a6caf0 100%)"></div>
<div class="t" style="left:606px;top:21px;"><span class="cj" style="color:#fff;font-weight:bold;letter-spacing:1px">测量结果</span></div>
<div style="position:absolute;left:862px;top:20px;width:16px;height:14px;box-sizing:border-box;background:#d4d0c8;border:1px solid;border-color:#fff #404040 #404040 #fff"></div>
<svg style="position:absolute;left:866px;top:23px" width="8" height="8"><path d="M0.5 0.5L7 7M7 0.5L0.5 7" stroke="#000" stroke-width="1.6"/></svg>
<svg style="position:absolute;left:586px;top:18px" width="90" height="220" viewBox="586 18 90 220"><rect x="589.5" y="23" width="10.5" height="10.5" fill="url(#dithY)"/><rect x="591.5" y="21.5" width="11" height="11" fill="#101010"/><rect x="591.5" y="21.5" width="9.7" height="9.7" fill="#fff"/><rect x="592.5" y="22.5" width="8.7" height="8.7" fill="url(#dithC2)"/><rect x="591" y="42" width="18" height="17.7" fill="#f4f2e8"/><path d="M591.6 42V59.3H609" stroke="#000" stroke-width="1" fill="none"/><path d="M592.2 47.3L600.5 55H608.8" stroke="#80d0f8" stroke-width="1.8" fill="none"/><path d="M592.2 54.5L598 49.2C599 48.4 600 48.6 601 49.6L603 51.8C604 52.8 605 52.6 606 51.4L608.8 48" stroke="#1838a0" stroke-width="1.4" fill="none"/><path d="M620.8 57.6V47.8H625.3L626.8 49.6H632V57.6Z" fill="url(#dithY)" stroke="#808070" stroke-width="0.8"/><path d="M621 57.6L625.8 52.8H638.7L634 57.6Z" fill="#f0e040" stroke="#606050" stroke-width="0.9"/><path d="M628.4 46C629.8 43 633.5 42.6 636 45.6" stroke="#000" stroke-width="1.3" fill="none"/><path d="M634.3 47.9H638.7V43.7Z" fill="#000"/><path d="M650.3 58.4L653.4 55H664L661 58.4Z" fill="#fff" stroke="#303030" stroke-width="0.9"/><path d="M650.3 58.9H661" stroke="#000" stroke-width="1"/><rect x="652.5" y="50.5" width="6.4" height="6.4" fill="url(#dithC3)" stroke="#000" stroke-width="1"/><rect x="660.7" y="44.7" width="5.2" height="5" fill="url(#dithC3)" stroke="#000" stroke-width="1"/><path d="M653.8 49.6V46.3H657" stroke="#000" stroke-width="1.3" fill="none"/><path d="M656.3 43.4V49L659.3 46.2Z" fill="#000"/><path d="M606.5 129.5H614.5L617.5 132.5V143.5H606.5Z" fill="#fff" stroke="#707070" stroke-width="1"/><path d="M614.5 129.5V132.5H617.5" fill="none" stroke="#707070" stroke-width="1"/><g transform="translate(612,164.7) rotate(-43)"><rect x="-11" y="-2.2" width="22" height="4.4" fill="#f4e020" stroke="#706020" stroke-width="0.8"/><path d="M-11 -0.5H8" stroke="#fff8a0" stroke-width="1"/><rect x="9" y="-2.2" width="4" height="4.4" fill="#c83020" stroke="#702010" stroke-width="0.6"/><path d="M-11 -2.2L-14.5 0L-11 2.2Z" fill="#e8e0d0" stroke="#606060" stroke-width="0.6"/><path d="M-13 -0.9L-14.8 0L-13 0.9Z" fill="#303030"/></g><path d="M604.5 184.5H610.5L613.5 187.5V195.5H604.5Z" fill="#fff" stroke="#707070" stroke-width="1"/><path d="M606 187.5h4M606 189.5h6M606 191.5h6M606 193.5h6" stroke="#404040" stroke-width="0.9"/><path d="M611.5 190.5H617.5L620.5 193.5V201.5H611.5Z" fill="#fff" stroke="#0030a0" stroke-width="1.1"/><path d="M613 193.5h4M613 195.5h6M613 197.5h6M613 199.5h6" stroke="#000" stroke-width="0.9"/><path d="M604 215C609 219 615 224 620 229.5" stroke="#c00000" stroke-width="3.2" stroke-linecap="round" fill="none"/><path d="M620.5 213.5C614 218 608 223.5 604.5 228.5" stroke="#c00000" stroke-width="2.8" stroke-linecap="round" fill="none"/><path d="M620.5 213.5L616 215.5" stroke="#e02020" stroke-width="1.2"/><rect x="620" y="230" width="1.5" height="1.5" fill="#c00000"/></svg>
<div style="position:absolute;left:588px;top:71px;width:300px;height:35px;box-sizing:border-box;border:1px solid #808080"></div>
<div style="position:absolute;left:589px;top:72px;width:300px;height:35px;box-sizing:border-box;border:1px solid #fff;border-right:none"></div>
<div style="position:absolute;left:588px;top:71px;width:300px;height:35px;box-sizing:border-box;border:1px solid #808080;border-right-color:transparent"></div>
<div style="position:absolute;left:603px;top:65px;width:54px;height:13px;box-sizing:border-box;background:#d4d0c8"></div>
<div class="t" style="left:606px;top:65px;"><span class="cj">图形类型</span></div>
<div style="position:absolute;left:598px;top:80px;width:269px;height:20px;box-sizing:border-box;background:#fff;border:1px solid;border-color:#808080 #fff #fff #808080"></div>
<div style="position:absolute;left:599px;top:81px;width:267px;height:18px;box-sizing:border-box;border:1px solid;border-color:#404040 #d4d0c8 #d4d0c8 #404040"></div>
<div class="t" style="left:603px;top:84px;"><span class="cj">测量与时间</span></div>
<div style="position:absolute;left:850px;top:82px;width:15px;height:16px;box-sizing:border-box;background:#d4d0c8;border:1px solid;border-color:#d4d0c8 #404040 #404040 #d4d0c8"></div>
<div style="position:absolute;left:851px;top:83px;width:13px;height:14px;box-sizing:border-box;border:1px solid;border-color:#fff #808080 #808080 #fff"></div>
<svg style="position:absolute;left:854px;top:88px" width="7" height="4"><path d="M0 0H7L3.5 4Z" fill="#000"/></svg>
<div style="position:absolute;left:588px;top:113px;width:300px;height:157px;box-sizing:border-box;border:1px solid #808080"></div>
<div style="position:absolute;left:589px;top:114px;width:300px;height:157px;box-sizing:border-box;border:1px solid #fff;border-right:none"></div>
<div style="position:absolute;left:588px;top:113px;width:300px;height:157px;box-sizing:border-box;border:1px solid #808080;border-right-color:transparent"></div>
<div style="position:absolute;left:603px;top:107px;width:30px;height:13px;box-sizing:border-box;background:#d4d0c8"></div>
<div class="t" style="left:606px;top:107px;"><span class="cj">测量</span></div>
<div style="position:absolute;left:631px;top:123px;width:236px;height:115px;box-sizing:border-box;background:#fff;border:1px solid;border-color:#808080 #fff #fff #808080"></div>
<div style="position:absolute;left:632px;top:124px;width:234px;height:113px;box-sizing:border-box;border:1px solid;border-color:#404040 #d4d0c8 #d4d0c8 #404040"></div>
<div style="position:absolute;left:633px;top:125px;width:131px;height:13px;box-sizing:border-box;background:#d4d0c8;border:1px solid;border-color:#fff #404040 #404040 #fff"></div>
<div style="position:absolute;left:634px;top:126px;width:129px;height:11px;box-sizing:border-box;border:1px solid;border-color:transparent #808080 #808080 transparent"></div>
<div class="t" style="left:634px;top:125.5px;"><span class="cj">名称</span></div>
<div style="position:absolute;left:764px;top:125px;width:53px;height:13px;box-sizing:border-box;background:#d4d0c8;border:1px solid;border-color:#fff #404040 #404040 #fff"></div>
<div style="position:absolute;left:765px;top:126px;width:51px;height:11px;box-sizing:border-box;border:1px solid;border-color:transparent #808080 #808080 transparent"></div>
<div class="t" style="left:765px;top:125.5px;"><span class="cj">值</span></div>
<div style="position:absolute;left:817px;top:125px;width:27px;height:13px;box-sizing:border-box;background:#d4d0c8;border:1px solid;border-color:#fff #404040 #404040 #fff"></div>
<div style="position:absolute;left:818px;top:126px;width:25px;height:11px;box-sizing:border-box;border:1px solid;border-color:transparent #808080 #808080 transparent"></div>
<div class="t" style="left:818px;top:125.5px;"><span class="cj">状态</span></div>
<div style="position:absolute;left:844px;top:125px;width:21px;height:13px;box-sizing:border-box;background:#d4d0c8;border:1px solid;border-color:#fff #404040 #404040 #fff"></div>
<div style="position:absolute;left:845px;top:126px;width:19px;height:11px;box-sizing:border-box;border:1px solid;border-color:transparent #808080 #808080 transparent"></div>
<div class="t" style="left:634px;top:139.0px;color:#000"><span class="cj">第</span><span class="n">1</span><span class="cj">片输出连杆位置</span></div>
<div class="t" style="left:765px;top:139.0px;color:#000"><span class="n">437<i>.</i>83</span></div>
<div class="t" style="left:634px;top:153.0px;color:#000"><span class="cj">第</span><span class="n">2</span><span class="cj">片输出连杆位置</span></div>
<div class="t" style="left:765px;top:153.0px;color:#000"><span class="n">478<i>.</i>473</span></div>
<div class="t" style="left:634px;top:167.0px;color:#000"><span class="cj">输出连杆加速度第二片</span></div>
<div class="t" style="left:765px;top:167.0px;color:#000"><span class="n">120<i>.</i>932</span></div>
<div class="t" style="left:634px;top:181.0px;color:#000"><span class="cj">输出连杆加速度第一片</span></div>
<div class="t" style="left:765px;top:181.0px;color:#000"><span class="n">100<i>.</i>957</span></div>
<div style="position:absolute;left:633px;top:195px;width:232px;height:14px;box-sizing:border-box;background:#0a246a;border:1px dotted #c8b870"></div>
<div class="t" style="left:634px;top:195.0px;color:#fff"><span class="cj" style="color:#fff">转动轴加速度</span></div>
<div class="t" style="left:765px;top:195.0px;color:#fff"><span class="n">171<i>.</i>638</span></div>
<div style="position:absolute;left:632px;top:245px;width:13px;height:13px;box-sizing:border-box;background:#fff;border:1px solid;border-color:#808080 #fff #fff #808080"></div>
<div style="position:absolute;left:633px;top:246px;width:11px;height:11px;box-sizing:border-box;border:1px solid;border-color:#404040 #d4d0c8 #d4d0c8 #404040"></div>
<div class="t" style="left:648px;top:245px;"><span class="cj">分别绘制测量图形</span></div>
<div style="position:absolute;left:583px;top:276px;width:300px;height:1px;box-sizing:border-box;background:#fff"></div>
<div style="position:absolute;left:583px;top:280px;width:300px;height:1px;box-sizing:border-box;background:#808080"></div>
<div style="position:absolute;left:583px;top:281px;width:300px;height:1px;box-sizing:border-box;background:#404040"></div>
<div style="position:absolute;left:588px;top:292px;width:300px;height:95px;box-sizing:border-box;border:1px solid #808080"></div>
<div style="position:absolute;left:589px;top:293px;width:300px;height:95px;box-sizing:border-box;border:1px solid #fff;border-right:none"></div>
<div style="position:absolute;left:588px;top:292px;width:300px;height:95px;box-sizing:border-box;border:1px solid #808080;border-right-color:transparent"></div>
<div style="position:absolute;left:603px;top:286px;width:42px;height:13px;box-sizing:border-box;background:#d4d0c8"></div>
<div class="t" style="left:606px;top:286px;"><span class="cj">结果集</span></div>
<div style="position:absolute;left:598px;top:305px;width:269px;height:75px;box-sizing:border-box;background:#fff;border:1px solid;border-color:#808080 #fff #fff #808080"></div>
<div style="position:absolute;left:599px;top:306px;width:267px;height:73px;box-sizing:border-box;border:1px solid;border-color:#404040 #d4d0c8 #d4d0c8 #404040"></div>
<div style="position:absolute;left:600px;top:307px;width:265px;height:14px;box-sizing:border-box;background:#0a246a"></div>
<div class="t" style="left:603px;top:308px;color:#fff"><span class="m">AnalysisDefinition1</span></div>
<div style="position:absolute;left:713px;top:393px;width:40px;height:20px;box-sizing:border-box;background:#d4d0c8;border:1px solid;border-color:#404040"></div>
<div style="position:absolute;left:714px;top:394px;width:38px;height:18px;box-sizing:border-box;border:1px solid;border-color:#fff #404040 #404040 #fff"></div>
<div style="position:absolute;left:715px;top:395px;width:36px;height:16px;box-sizing:border-box;border:1px solid;border-color:transparent #808080 #808080 transparent"></div>
<div class="t" style="left:721px;top:397px;"><span class="cj">关闭</span></div>
</body></html>
